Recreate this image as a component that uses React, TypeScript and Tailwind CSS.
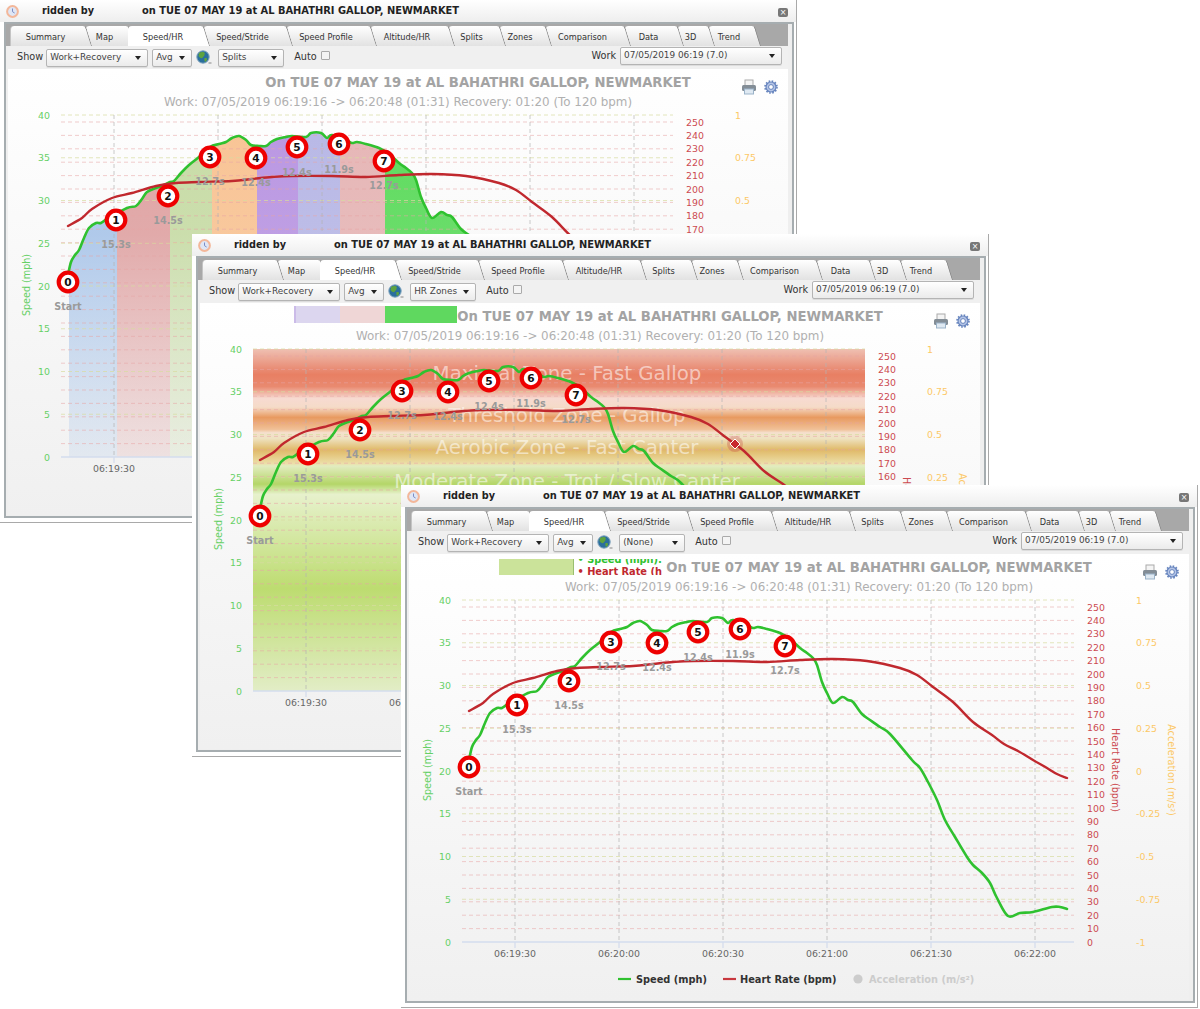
const tabs = [
  { name: 'Summary', w: 'w-[75px]' },
  { name: 'Map', w: 'w-[43px]' },
  { name: 'Speed/HR', w: 'w-[75px]', active: true },
  { name: 'Speed/Stride', w: 'w-[83px]' },
  { name: 'Speed Profile', w: 'w-[84px]' },
  { name: 'Altitude/HR', w: 'w-[78px]' },
  { name: 'Splits', w: 'w-[51px]' },
  { name: 'Zones', w: 'w-[46px]' },
  { name: 'Comparison', w: 'w-[79px]' },
  { name: 'Data', w: 'w-[53px]' },
  { name: '3D', w: 'w-[31px]' },
  { name: 'Trend', w: 'w-[46px]' },
]

// curve points in window coordinates, read off the reference
const speedLine = [
  [68, 275], [71, 262], [75, 255], [79, 250], [84, 238], [89, 228], [96, 223], [101, 223], [107, 219],
  [127, 208], [136, 206], [142, 199], [147, 192], [156, 188], [162, 186], [170, 182], [174, 181], [181, 173],
  [189, 165], [199, 157], [210, 147], [219, 144], [226, 142], [232, 138], [239, 136], [246, 140], [251, 145],
  [259, 146], [266, 146], [271, 142], [277, 139], [286, 137], [292, 136], [306, 137], [311, 133], [321, 133],
  [327, 138], [332, 135], [346, 140], [352, 143], [357, 142], [366, 144], [379, 148], [389, 154], [399, 163],
  [406, 168], [412, 173], [416, 180], [421, 197], [426, 208], [432, 218], [441, 212], [447, 215], [452, 217],
  [461, 229], [469, 235], [479, 242], [489, 249], [511, 275], [519, 283], [527, 297], [536, 315], [544, 335],
  [554, 352], [566, 372], [572, 380], [581, 388], [589, 398], [596, 413], [607, 431], [619, 428], [632, 427],
  [651, 422], [659, 422], [666, 424],
]

const hrLine = [
  [68, 226], [82, 218], [92, 209], [112, 198], [132, 193], [156, 186], [176, 183], [199, 182], [232, 181],
  [252, 179], [272, 177], [292, 176], [332, 176], [366, 177], [399, 175], [432, 174], [466, 176], [499, 183],
  [516, 190], [532, 202], [552, 217], [572, 237], [591, 250], [603, 259], [617, 266], [632, 275], [646, 283],
  [656, 289], [666, 293],
]

const toPoints = (pts: number[][]) => pts.map((p) => p.join(',')).join(' ')

// catmull-rom through the points so the series don't look kinked
const toCurve = (pts: number[][]) => {
  let d = `M${pts[0][0]} ${pts[0][1]}`
  for (let i = 0; i < pts.length - 1; i++) {
    const p0 = pts[i - 1] ?? pts[i]
    const p1 = pts[i]
    const p2 = pts[i + 1]
    const p3 = pts[i + 2] ?? p2
    const c1x = p1[0] + (p2[0] - p0[0]) / 6
    const c1y = p1[1] + (p2[1] - p0[1]) / 6
    const c2x = p2[0] - (p3[0] - p1[0]) / 6
    const c2y = p2[1] - (p3[1] - p1[1]) / 6
    d += ` C${c1x} ${c1y} ${c2x} ${c2y} ${p2[0]} ${p2[1]}`
  }
  return d
}

const splits = [
  { x: 69, w: 48, c: '#a3c1e8' },
  { x: 117, w: 53, c: '#dd9c9c' },
  { x: 170, w: 42, c: '#c3d99f' },
  { x: 212, w: 45, c: '#f8bf8c' },
  { x: 257, w: 41, c: '#b48ee0' },
  { x: 298, w: 42, c: '#b2b2e4' },
  { x: 340, w: 45, c: '#e4b0b0' },
  { x: 385, w: 290, c: '#50d850' },
]

const markers = [
  { n: 0, x: 68, y: 282, label: 'Start', ly: 306 },
  { n: 1, x: 116, y: 220, label: '15.3s', ly: 244 },
  { n: 2, x: 168, y: 196, label: '14.5s', ly: 220 },
  { n: 3, x: 210, y: 157, label: '12.7s', ly: 181 },
  { n: 4, x: 256, y: 158, label: '12.4s', ly: 182 },
  { n: 5, x: 297, y: 147, label: '12.4s', ly: 172 },
  { n: 6, x: 339, y: 144, label: '11.9s', ly: 169 },
  { n: 7, x: 384, y: 161, label: '12.7s', ly: 185 },
]

const zoneLabels = [
  { t: 'Maximal Zone - Fast Gallop', y: 139 },
  { t: 'Threshold Zone - Gallop', y: 181 },
  { t: 'Aerobic Zone - Fast Canter', y: 213 },
  { t: 'Moderate Zone - Trot / Slow Canter', y: 247 },
]

const hrTicks = Array.from({ length: 26 }, (_, i) => i * 10)
const speedTicks = [0, 5, 10, 15, 20, 25, 30, 35, 40]
const accelTicks = ['-1', '-0.75', '-0.5', '-0.25', '0', '0.25', '0.5', '0.75', '1']
const timeTicks = [
  { x: 114, t: '06:19:30' },
  { x: 218, t: '06:20:00' },
  { x: 322, t: '06:20:30' },
  { x: 426, t: '06:21:00' },
  { x: 530, t: '06:21:30' },
  { x: 634, t: '06:22:00' },
]

const speedY = (v: number) => 457 - v * 8.55
const hrY = (v: number) => 457 - v * 1.34

function Chart({ mode }: { mode: 'splits' | 'zones' | 'none' }) {
  const clipId = `under-${mode}`
  return (
    <svg viewBox="8 110 780 405" className="block w-[780px] h-[405px]">
      <defs>
        <clipPath id={clipId}>
          <polygon points={`${toPoints(speedLine)} 666,457 68,457`} />
        </clipPath>
        {splits.map((s, i) => (
          <linearGradient key={i} id={`band-${mode}-${i}`} gradientUnits="userSpaceOnUse" x1="0" y1="115" x2="0" y2="457">
            <stop offset="0" stopColor={s.c} stopOpacity="0.92" />
            <stop offset="0.35" stopColor={s.c} stopOpacity="0.85" />
            <stop offset="1" stopColor={s.c} stopOpacity="0.2" />
          </linearGradient>
        ))}
        <linearGradient id={`zones-${mode}`} x1="0" y1="0" x2="0" y2="1">
          <stop offset="0" stopColor="#efc0b2" />
          <stop offset="0.055" stopColor="#e98f78" />
          <stop offset="0.075" stopColor="#e87f63" />
          <stop offset="0.11" stopColor="#e98a70" />
          <stop offset="0.145" stopColor="#f7dad1" />
          <stop offset="0.17" stopColor="#f5dbc8" />
          <stop offset="0.2" stopColor="#e89a60" />
          <stop offset="0.235" stopColor="#f0c097" />
          <stop offset="0.245" stopColor="#f5e0ce" />
          <stop offset="0.262" stopColor="#eee2c0" />
          <stop offset="0.295" stopColor="#e0b968" />
          <stop offset="0.335" stopColor="#ecdfa8" />
          <stop offset="0.342" stopColor="#e2ecc0" />
          <stop offset="0.395" stopColor="#b4d668" />
          <stop offset="0.425" stopColor="#e7f1cc" />
          <stop offset="0.7" stopColor="#bddc70" />
          <stop offset="1" stopColor="#e2edc6" />
        </linearGradient>
      </defs>

      {mode === 'zones' && <rect x="61" y="115" width="612" height="342" fill={`url(#zones-${mode})`} />}

      {mode === 'splits' &&
        splits.map((s, i) => (
          <rect key={i} x={s.x} y="115" width={s.w} height="342" fill={`url(#band-${mode}-${i})`} clipPath={`url(#${clipId})`} />
        ))}

      {/* grid */}
      {hrTicks.slice(1).map((v) => (
        <line key={v} x1="61" x2="673" y1={hrY(v)} y2={hrY(v)} stroke="#e8a5a5" strokeOpacity="0.55" strokeDasharray="4 3" />
      ))}
      {speedTicks.slice(1).map((v) => (
        <line key={v} x1="61" x2="673" y1={speedY(v)} y2={speedY(v)} stroke="#d7dca0" strokeOpacity="0.7" strokeDasharray="4 3" />
      ))}
      {timeTicks.map((t) => (
        <g key={t.x}>
          <line x1={t.x} x2={t.x} y1="115" y2="457" stroke="#b5b5b5" strokeOpacity="0.7" strokeDasharray="4 3" />
          <line x1={t.x} x2={t.x} y1="457" y2="463" stroke="#ccd6eb" />
          <text x={t.x} y="472" textAnchor="middle" fontSize="9.4" fill="#666">{t.t}</text>
        </g>
      ))}
      <line x1="61" x2="673" y1="457" y2="457" stroke="#d3dcee" strokeWidth="1.5" />

      {/* axes */}
      {speedTicks.map((v) => (
        <text key={v} x="50" y={speedY(v) + 3.5} textAnchor="end" fontSize="9.4" fill="#66d066">{v}</text>
      ))}
      {hrTicks.map((v) => (
        <text key={v} x="686" y={hrY(v) + 3.5} fontSize="9.4" fill="#cc4a50">{v}</text>
      ))}
      {accelTicks.map((v, i) => (
        <text key={v} x="735" y={457 - i * 42.75 + 3.5} fontSize="9.4" fill="#fcc866">{v}</text>
      ))}
      <text transform="translate(30,285) rotate(-90)" textAnchor="middle" fontSize="9.6" fill="#66d066">Speed (mph)</text>
      <text transform="translate(711,285) rotate(90)" textAnchor="middle" fontSize="9.6" fill="#cc4a50">Heart Rate (bpm)</text>
      <text transform="translate(767,285) rotate(90)" textAnchor="middle" fontSize="9.6" fill="#fcc866">Acceleration (m/s²)</text>

      {mode === 'zones' &&
        zoneLabels.map((z) => (
          <text key={z.t} x="375" y={z.y + 7} textAnchor="middle" fontSize="19.8" fill="#fff" fillOpacity="0.55">{z.t}</text>
        ))}

      {/* series */}
      <path d={toCurve(speedLine)} fill="none" stroke="#2fc12f" strokeWidth="2.6" strokeLinecap="round" />
      <path d={toCurve(hrLine)} fill="none" stroke="#c0282e" strokeWidth="2.4" strokeLinecap="round" />

      {mode === 'zones' && (
        <g>
          <circle cx="543" cy="210" r="8" fill="#c0282e" fillOpacity="0.25" />
          <polygon points="543,205 548,210 543,215 538,210" fill="#c8282e" stroke="#fff" />
        </g>
      )}

      {markers.map((m) => (
        <g key={m.n}>
          <text x={m.x} y={m.ly + 3.5} textAnchor="middle" fontSize="9.6" fontWeight="700" fill="#9a9a9a">{m.label}</text>
          <circle cx={m.x} cy={m.y} r="9.3" fill="#fff" stroke="#ee0000" strokeWidth="4.2" />
          <text x={m.x} y={m.y + 3.8} textAnchor="middle" fontSize="10.6" fontWeight="700" fill="#111">{m.n}</text>
        </g>
      ))}

      {/* legend */}
      <line x1="217" x2="230" y1="494" y2="494" stroke="#2fc12f" strokeWidth="2.2" />
      <text x="235" y="497.5" fontSize="9.8" fontWeight="700" fill="#333">Speed (mph)</text>
      <line x1="322" x2="335" y1="494" y2="494" stroke="#c8383e" strokeWidth="2.2" />
      <text x="339" y="497.5" fontSize="9.8" fontWeight="700" fill="#333">Heart Rate (bpm)</text>
      <circle cx="457" cy="494" r="4.6" fill="#cccccc" />
      <text x="468" y="497.5" fontSize="9.8" fontWeight="700" fill="#cccccc">Acceleration (m/s²)</text>
    </svg>
  )
}

function Select({ label, width }: { label: string; width: string }) {
  return (
    <div className={`${width} h-[18px] flex items-center justify-between pl-[3px] pr-[6px] rounded-[2px] border border-[#b4b4b4] bg-gradient-to-b from-white to-[#ebebeb] text-[8.9px] text-[#444] shadow-[0_1px_0_#ddd]`}>
      <span>{label}</span>
      <span className="w-0 h-0 border-x-[3.5px] border-x-transparent border-t-[4px] border-t-[#222]" />
    </div>
  )
}

function GlobeIcon() {
  return (
    <svg width="16" height="15" viewBox="0 0 16 15" className="shrink-0">
      <circle cx="7" cy="7" r="6.2" fill="#2a6f9e" stroke="#7fa3bd" />
      <path d="M3 3 C5 1.5 8 1.5 9 3 C8 5 9 6 7 7 C6 9.5 3.5 7.5 2.5 6 Z M8.5 8 C11 7.5 12 9 10 11.5 C8.5 12.5 8 10 8.5 8 Z" fill="#5ea33f" />
      <path d="M12.5 13 H15.5" stroke="#888" />
    </svg>
  )
}

function ClockIcon() {
  return (
    <svg width="13" height="13" viewBox="0 0 13 13">
      <circle cx="6.5" cy="6.5" r="5.4" fill="#dfe6f5" stroke="#f3b79a" strokeWidth="2" />
      <path d="M6.5 3.5 V6.7 L8.6 8" fill="none" stroke="#7a8cc5" />
    </svg>
  )
}

function PrintIcon() {
  return (
    <svg width="16" height="16" viewBox="0 0 16 16">
      <rect x="4" y="1" width="8" height="6" fill="#f4f4f4" stroke="#aaa" />
      <rect x="1" y="6" width="14" height="6" rx="1.5" fill="#838d96" />
      <rect x="3.5" y="10" width="9" height="5" fill="#dfe9f2" stroke="#9bb3c9" />
    </svg>
  )
}

function GearIcon() {
  return (
    <svg width="14" height="14" viewBox="0 0 14 14">
      <circle cx="7" cy="7" r="5" fill="#b4c4e6" stroke="#6583bd" strokeWidth="1.2" />
      <circle cx="7" cy="7" r="6" fill="none" stroke="#6583bd" strokeWidth="1.6" strokeDasharray="1.6 1.54" />
      <circle cx="7" cy="7" r="2.4" fill="#fff" stroke="#6583bd" />
    </svg>
  )
}

function Window({ zone, mode, className }: { zone: string; mode: 'splits' | 'zones' | 'none'; className: string }) {
  return (
    <section className={`absolute w-[797px] h-[523px] flex flex-col bg-white border-r border-b border-[#a9a9a9] ${className}`}>
      {/* title bar */}
      <div className="h-[22px] shrink-0 relative flex items-center bg-gradient-to-b from-white to-[#eeeeee] text-[9.7px] font-bold text-[#222]">
        <span className="ml-[6px] flex"><ClockIcon /></span>
        <span className="ml-[23px]">ridden by</span>
        <span className="ml-[48px] text-[9.9px]">on TUE 07 MAY 19 at AL BAHATHRI GALLOP, NEWMARKET</span>
        <span className="absolute right-[8px] top-[8px] w-[10px] h-[9px] rounded-[2px] bg-[#777] text-white text-[8px] leading-[9px] text-center font-normal">×</span>
      </div>

      <div className="flex-1 min-h-0 flex flex-col ml-[4px] mr-[2px] mb-[4px] border-2 border-[#a6adb0] bg-[#efefef]">
        {/* tabs */}
        <div className="h-[22px] shrink-0 flex pl-[4px] pt-[2px] mr-[4px] bg-[#a8a8a8]">
          {tabs.map((tab, i) => (
            <div
              key={tab.name}
              style={{ zIndex: tab.active ? 30 : 20 - i }}
              className={`${tab.w} relative h-[20px] pr-[5px] pt-[2px] rounded-tl-[4px] flex items-center justify-center text-[8.2px] text-[#444] after:absolute after:-right-[4px] after:top-0 after:bottom-0 after:w-[12px] after:skew-x-[17deg] after:rounded-tr-[3px] after:border-r after:border-[#8c8c8c] ${
                tab.active
                  ? 'bg-white after:bg-white'
                  : 'bg-gradient-to-b from-white to-[#e2e2e2] border-l border-[#c4c4c4] after:bg-gradient-to-b after:from-white after:to-[#e2e2e2]'
              }`}
            >
              <span className="relative z-10 text-[#333]">{tab.name}</span>
            </div>
          ))}
        </div>

        {/* toolbar */}
        <div className="h-[23px] shrink-0 flex items-center ml-[2px] mr-[4px] pl-[9px] pr-[6px] bg-[#f0f0f0] text-[9.7px] text-[#333]">
          <span className="mr-[3px]">Show</span>
          <Select label="Work+Recovery" width="w-[102px]" />
          <span className="w-[4px]" />
          <Select label="Avg" width="w-[40px]" />
          <span className="ml-[4px] mr-[6px] flex"><GlobeIcon /></span>
          <Select label={zone} width="w-[66px]" />
          <span className="ml-[10px]">Auto</span>
          <span className="ml-[4px] mb-[5px] w-[9px] h-[9px] rounded-[1px] border border-[#aaa] bg-[#f4f4f4]" />
          <span className="ml-auto mr-[4px] mb-[3px]">Work</span>
          <div className="mb-[3px]"><Select label="07/05/2019 06:19 (7.0)" width="w-[162px]" /></div>
        </div>

        {/* chart panel */}
        <div className="flex-1 min-h-0 relative ml-[2px] mr-[4px] mb-[1px] bg-gradient-to-b from-white to-[#f0f0f0] overflow-hidden">
          {mode === 'zones' && (
            <div className="absolute left-[94px] top-[3px] w-[163px] h-[17px] flex">
              <div className="w-[2px] bg-[#cbbbe8]" />
              <div className="w-[44px] bg-[#dcd6ef]" />
              <div className="w-[45px] bg-[#efd6d6]" />
              <div className="w-[72px] bg-[#5fd85f]" />
            </div>
          )}
          {mode === 'none' && (
            <div className="absolute left-[90px] top-[5px] w-[163px] h-[16px] flex overflow-hidden">
              <div className="w-[77px] bg-[#cbe39a] border-r border-[#9abf70]" />
              <div className="flex-1 pl-[3px] -mt-[1px] text-[9.8px] leading-[12px] font-bold whitespace-nowrap bg-white">
                <div className="-mt-[4px] text-[#2fc12f]">• Speed (mph):</div>
                <div className="text-[#c0282e]">• Heart Rate (h</div>
              </div>
            </div>
          )}
          <div className="relative h-[23px] pt-[3px] pl-[160px] text-center text-[13.2px] leading-[22px] font-bold text-[#a3a3a3]">
            On TUE 07 MAY 19 at AL BAHATHRI GALLOP, NEWMARKET
          </div>
          <div className="h-[18px] text-center text-[11.88px] leading-[20px] text-[#b0b0b0]">
            Work: 07/05/2019 06:19:16 -&gt; 06:20:48 (01:31) Recovery: 01:20 (To 120 bpm)
          </div>
          <Chart mode={mode} />
          <div className="absolute right-[31px] top-[10px] flex"><PrintIcon /></div>
          <div className="absolute right-[10px] top-[11px] flex"><GearIcon /></div>
        </div>
      </div>
    </section>
  )
}

export default function App() {
  return (
    <div className="relative w-[1200px] h-[1009px] overflow-hidden bg-white [font-family:'DejaVu_Sans',sans-serif]">
      <Window zone="Splits" mode="splits" className="left-0 top-0" />
      <Window zone="HR Zones" mode="zones" className="left-[192px] top-[234px]" />
      <Window zone="(None)" mode="none" className="left-[401px] top-[485px]" />
    </div>
  )
}
